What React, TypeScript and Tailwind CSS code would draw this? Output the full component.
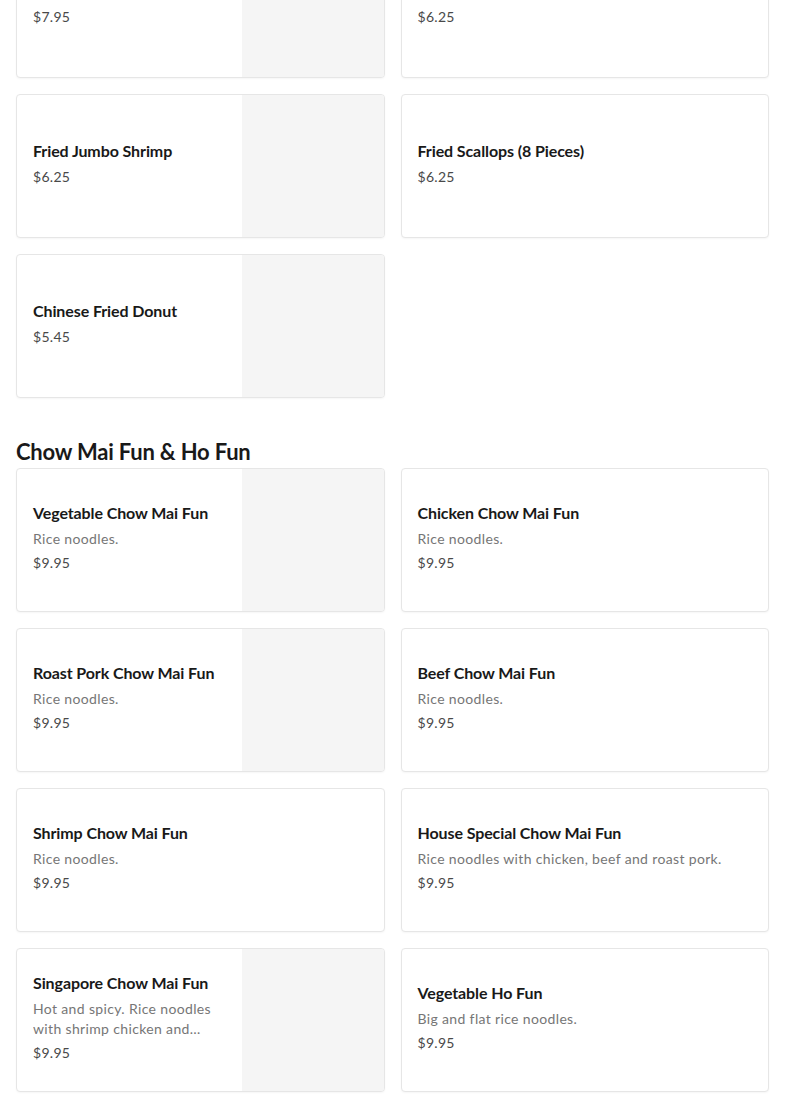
type Item = {
  name: string;
  price: string;
  description?: string;
  image?: boolean;
};

const appetizers: Item[] = [
  { name: "Fried Chicken Wings (4)", price: "$7.95", image: true },
  { name: "Fried Wontons (10)", price: "$6.25" },
  { name: "Fried Jumbo Shrimp", price: "$6.25", image: true },
  { name: "Fried Scallops (8 Pieces)", price: "$6.25" },
  { name: "Chinese Fried Donut", price: "$5.45", image: true },
];

const chowMaiFun: Item[] = [
  { name: "Vegetable Chow Mai Fun", description: "Rice noodles.", price: "$9.95", image: true },
  { name: "Chicken Chow Mai Fun", description: "Rice noodles.", price: "$9.95" },
  { name: "Roast Pork Chow Mai Fun", description: "Rice noodles.", price: "$9.95", image: true },
  { name: "Beef Chow Mai Fun", description: "Rice noodles.", price: "$9.95" },
  { name: "Shrimp Chow Mai Fun", description: "Rice noodles.", price: "$9.95" },
  {
    name: "House Special Chow Mai Fun",
    description: "Rice noodles with chicken, beef and roast pork.",
    price: "$9.95",
  },
  {
    name: "Singapore Chow Mai Fun",
    description: "Hot and spicy. Rice noodles with shrimp chicken and roast pork.",
    price: "$9.95",
    image: true,
  },
  { name: "Vegetable Ho Fun", description: "Big and flat rice noodles.", price: "$9.95" },
];

function MenuCard({ item }: { item: Item }) {
  return (
    <div className="flex h-[144px] overflow-hidden rounded-[4px] border border-[#e6e6e6] bg-white shadow-[0_1px_2px_rgba(0,0,0,0.04)]">
      <div className="flex min-w-0 flex-1 flex-col justify-center px-4 pb-[6px]">
        <h3 className="text-[16px] font-bold leading-6 tracking-[-0.1px] text-[#191919]">
          {item.name}
        </h3>
        {item.description && (
          <p className="mt-1 line-clamp-2 text-[14px] leading-5 tracking-[0.35px] text-[#767676]">
            {item.description}
          </p>
        )}
        <p className="mt-1 text-[14px] leading-5 tracking-[0.3px] text-[#494949]">{item.price}</p>
      </div>
      {item.image && <div className="w-[142px] shrink-0 bg-[#f5f5f5]" />}
    </div>
  );
}

export default function App() {
  return (
    <div className="min-h-screen bg-white px-4 font-['Lato',sans-serif]">
      <div className="-mt-[66px] grid grid-cols-2 gap-4">
        {appetizers.map((item) => (
          <MenuCard key={item.name} item={item} />
        ))}
      </div>

      <section className="mt-[40px]">
        <h2 className="mb-[2px] text-[22px] font-bold leading-7 tracking-[-0.2px] text-[#191919]">
          Chow Mai Fun &amp; Ho Fun
        </h2>
        <div className="grid grid-cols-2 gap-4 pb-10">
          {chowMaiFun.map((item) => (
            <MenuCard key={item.name} item={item} />
          ))}
        </div>
      </section>
    </div>
  );
}
